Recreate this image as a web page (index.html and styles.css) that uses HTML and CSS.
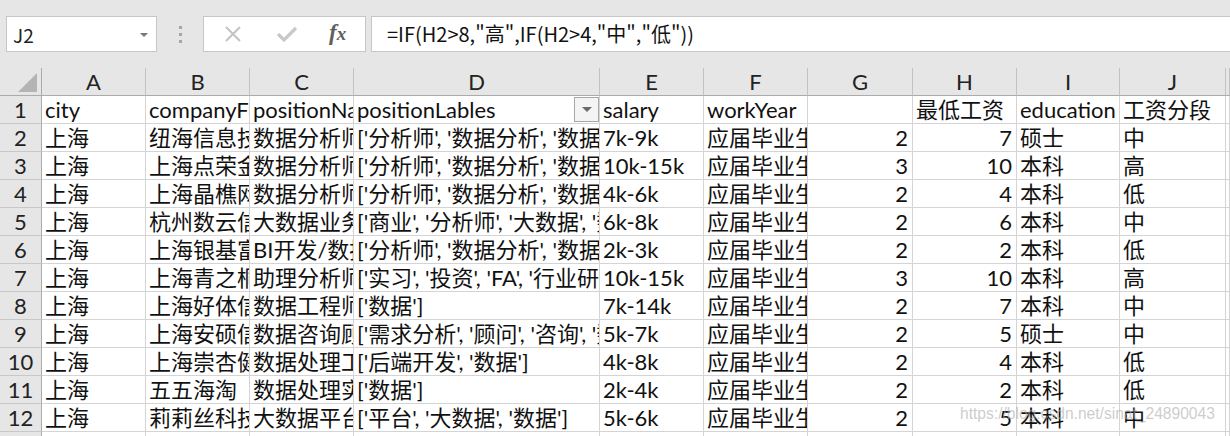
FILE: index.html
```html
<!DOCTYPE html>
<html lang="zh">
<head>
<meta charset="utf-8">
<title>Sheet</title>
<link rel="stylesheet" href="styles.css">
</head>
<body>
<div class="app">
  <div class="toolbar">
    <div class="namebox">
      <span class="name">J2</span>
      <span class="caret"></span>
    </div>
    <div class="grip"><i></i><i></i><i></i></div>
    <div class="btns">
      <svg class="ic-x" width="18" height="18" viewBox="0 0 18 18"><path d="M2 2 L16 16 M16 2 L2 16" stroke="#c3c3c3" stroke-width="2" fill="none"/></svg>
      <svg class="ic-ok" width="22" height="18" viewBox="0 0 22 18"><path d="M2 9 L8 15 L20 3" stroke="#c8c8c8" stroke-width="3.2" fill="none"/></svg>
      <span class="fx"><span class="f">f</span><span class="x">x</span></span>
    </div>
    <div class="formula">=IF(H2&gt;8,"高",IF(H2&gt;4,"中","低"))</div>
  </div>

  <div class="sheet">
    <div class="corner"><span class="tri"></span></div>
    <div class="ch">A</div><div class="ch">B</div><div class="ch">C</div><div class="ch">D</div><div class="ch">E</div><div class="ch">F</div><div class="ch">G</div><div class="ch">H</div><div class="ch">I</div><div class="ch">J</div><div class="ch"></div>

    <div class="rh">1</div><div class="c">city</div><div class="c">companyFullName</div><div class="c">positionName</div><div class="c filt"><span>positionLables</span><span class="fbtn"></span></div><div class="c">salary</div><div class="c">workYear</div><div class="c"></div><div class="c">最低工资</div><div class="c">education</div><div class="c">工资分段</div><div class="c"></div>

    <div class="rh">2</div><div class="c">上海</div><div class="c">纽海信息技术</div><div class="c">数据分析师</div><div class="c">['分析师', '数据分析', '数据']</div><div class="c">7k-9k</div><div class="c">应届毕业生</div><div class="c n">2</div><div class="c n">7</div><div class="c">硕士</div><div class="c">中</div><div class="c"></div>

    <div class="rh">3</div><div class="c">上海</div><div class="c">上海点荣金融</div><div class="c">数据分析师</div><div class="c">['分析师', '数据分析', '数据']</div><div class="c">10k-15k</div><div class="c">应届毕业生</div><div class="c n">3</div><div class="c n">10</div><div class="c">本科</div><div class="c">高</div><div class="c"></div>

    <div class="rh">4</div><div class="c">上海</div><div class="c">上海晶樵网络</div><div class="c">数据分析师</div><div class="c">['分析师', '数据分析', '数据']</div><div class="c">4k-6k</div><div class="c">应届毕业生</div><div class="c n">2</div><div class="c n">4</div><div class="c">本科</div><div class="c">低</div><div class="c"></div>

    <div class="rh">5</div><div class="c">上海</div><div class="c">杭州数云信息</div><div class="c">大数据业务</div><div class="c">['商业', '分析师', '大数据', '数据']</div><div class="c">6k-8k</div><div class="c">应届毕业生</div><div class="c n">2</div><div class="c n">6</div><div class="c">本科</div><div class="c">中</div><div class="c"></div>

    <div class="rh">6</div><div class="c">上海</div><div class="c">上海银基富力</div><div class="c">BI开发/数据</div><div class="c">['分析师', '数据分析', '数据']</div><div class="c">2k-3k</div><div class="c">应届毕业生</div><div class="c n">2</div><div class="c n">2</div><div class="c">本科</div><div class="c">低</div><div class="c"></div>

    <div class="rh">7</div><div class="c">上海</div><div class="c">上海青之桐投资</div><div class="c">助理分析师</div><div class="c">['实习', '投资', 'FA', '行业研究']</div><div class="c">10k-15k</div><div class="c">应届毕业生</div><div class="c n">3</div><div class="c n">10</div><div class="c">本科</div><div class="c">高</div><div class="c"></div>

    <div class="rh">8</div><div class="c">上海</div><div class="c">上海好体信息</div><div class="c">数据工程师</div><div class="c">['数据']</div><div class="c">7k-14k</div><div class="c">应届毕业生</div><div class="c n">2</div><div class="c n">7</div><div class="c">本科</div><div class="c">中</div><div class="c"></div>

    <div class="rh">9</div><div class="c">上海</div><div class="c">上海安硕信息</div><div class="c">数据咨询顾问</div><div class="c">['需求分析', '顾问', '咨询', '数据']</div><div class="c">5k-7k</div><div class="c">应届毕业生</div><div class="c n">2</div><div class="c n">5</div><div class="c">硕士</div><div class="c">中</div><div class="c"></div>

    <div class="rh">10</div><div class="c">上海</div><div class="c">上海崇杏健康</div><div class="c">数据处理工程师</div><div class="c">['后端开发', '数据']</div><div class="c">4k-8k</div><div class="c">应届毕业生</div><div class="c n">2</div><div class="c n">4</div><div class="c">本科</div><div class="c">低</div><div class="c"></div>

    <div class="rh">11</div><div class="c">上海</div><div class="c">五五海淘</div><div class="c">数据处理实习生</div><div class="c">['数据']</div><div class="c">2k-4k</div><div class="c">应届毕业生</div><div class="c n">2</div><div class="c n">2</div><div class="c">本科</div><div class="c">低</div><div class="c"></div>

    <div class="rh">12</div><div class="c">上海</div><div class="c">莉莉丝科技</div><div class="c">大数据平台开发</div><div class="c">['平台', '大数据', '数据']</div><div class="c">5k-6k</div><div class="c">应届毕业生</div><div class="c n">2</div><div class="c n">5</div><div class="c">本科</div><div class="c">中</div><div class="c"></div>

    <div class="rh"></div><div class="c"></div><div class="c"></div><div class="c"></div><div class="c"></div><div class="c"></div><div class="c"></div><div class="c"></div><div class="c"></div><div class="c"></div><div class="c"></div><div class="c"></div>
  </div>
  <div class="watermark">https://blog.csdn.net/sinat_24890043</div>
</div>
</body>
</html>
```

FILE: styles.css
```css
html, body {
  margin: 0;
  padding: 0;
  background: #ffffff;
  overflow: hidden;
}
.app {
  position: relative;
  width: 1230px;
  height: 436px;
  overflow: hidden;
  font-family: "Noto Sans CJK SC", "Noto Sans", sans-serif;
  color: #111;
}
.toolbar {
  height: 68px;
  box-sizing: border-box;
  background: #e6e6e6;
  display: flex;
  align-items: flex-start;
  padding-top: 16px;
}
.namebox {
  margin-left: 6px;
  width: 151px;
  height: 36px;
  box-sizing: border-box;
  border: 1px solid #c6c6c6;
  background: #fff;
  display: flex;
  align-items: center;
  justify-content: space-between;
  padding: 0 8px 0 6px;
}
.name {
  font-size: 19px;
  color: #222;
}
.caret {
  width: 0;
  height: 0;
  border-left: 4px solid transparent;
  border-right: 4px solid transparent;
  border-top: 4px solid #777;
  margin-top: 2px;
}
.grip {
  width: 46px;
  height: 36px;
  display: flex;
  flex-direction: column;
  align-items: center;
  justify-content: center;
  gap: 4px;
}
.grip i {
  display: block;
  width: 3px;
  height: 3px;
  background: #a6a6a6;
}
.btns {
  width: 163px;
  height: 36px;
  box-sizing: border-box;
  border: 1px solid #c6c6c6;
  background: #fff;
  display: flex;
  align-items: center;
  padding-left: 20px;
}
.ic-x { margin-right: 34px; }
.ic-ok { margin-right: 31px; }
.fx {
  font-family: "Liberation Serif", "DejaVu Serif", serif;
  font-style: italic;
  font-weight: bold;
  font-size: 23px;
  color: #5e5e5e;
  line-height: 1;
  margin-top: -3px;
}
.fx .x { font-size: 19px; margin-left: 0; }
.formula {
  margin-left: 5px;
  flex: 1;
  height: 36px;
  box-sizing: border-box;
  border: 1px solid #c6c6c6;
  border-right: none;
  background: #fff;
  font-size: 20px;
  line-height: 34px;
  padding-left: 15px;
  color: #111;
  white-space: nowrap;
}

.sheet {
  display: grid;
  grid-template-columns: 42px 104px 104px 104px 246px 104px 104px 105px 104px 103px 106px 1fr;
  grid-auto-rows: 28px;
  font-family: "Lato", "Noto Sans CJK SC", sans-serif;
}
.sheet > div {
  box-sizing: border-box;
  overflow: hidden;
  white-space: nowrap;
}
.corner {
  position: relative;
  background: #e6e6e6;
  border-right: 1px solid #ababab;
  border-bottom: 1px solid #ababab;
  height: 28px;
}
.tri {
  position: absolute;
  right: 4px;
  bottom: 3px;
  width: 0;
  height: 0;
  border-left: 19px solid transparent;
  border-bottom: 19px solid #b4b4b4;
}
.ch {
  background: #e6e6e6;
  border-right: 1px solid #c2c2c2;
  border-bottom: 1px solid #ababab;
  text-align: center;
  font-size: 22px;
  line-height: 28px;
  color: #222;
}
.rh {
  background: #e6e6e6;
  border-right: 1px solid #ababab;
  border-bottom: 1px solid #c8c8c8;
  text-align: center;
  font-size: 22px;
  line-height: 28px;
  color: #222;
}
.c {
  background: #fff;
  border-right: 1px solid #d4d4d4;
  border-bottom: 1px solid #d4d4d4;
  font-size: 22px;
  line-height: 28px;
  padding-left: 3px;
  color: #111;
}
.c.n {
  text-align: right;
  padding-left: 0;
  padding-right: 4px;
}
.filt {
  position: relative;
}
.fbtn {
  position: absolute;
  right: 0;
  top: 1px;
  width: 25px;
  height: 25px;
  box-sizing: border-box;
  border: 1px solid #a8a8a8;
  background: #f4f4f4;
}
.fbtn::after {
  content: "";
  position: absolute;
  left: 7px;
  top: 9px;
  border-left: 5px solid transparent;
  border-right: 5px solid transparent;
  border-top: 5px solid #6b6b6b;
}
.watermark {
  position: absolute;
  left: 960px;
  top: 405px;
  font-family: "Liberation Sans", Arial, sans-serif;
  font-size: 15.6px;
  color: rgba(170, 170, 170, 0.6);
  white-space: nowrap;
}
```
